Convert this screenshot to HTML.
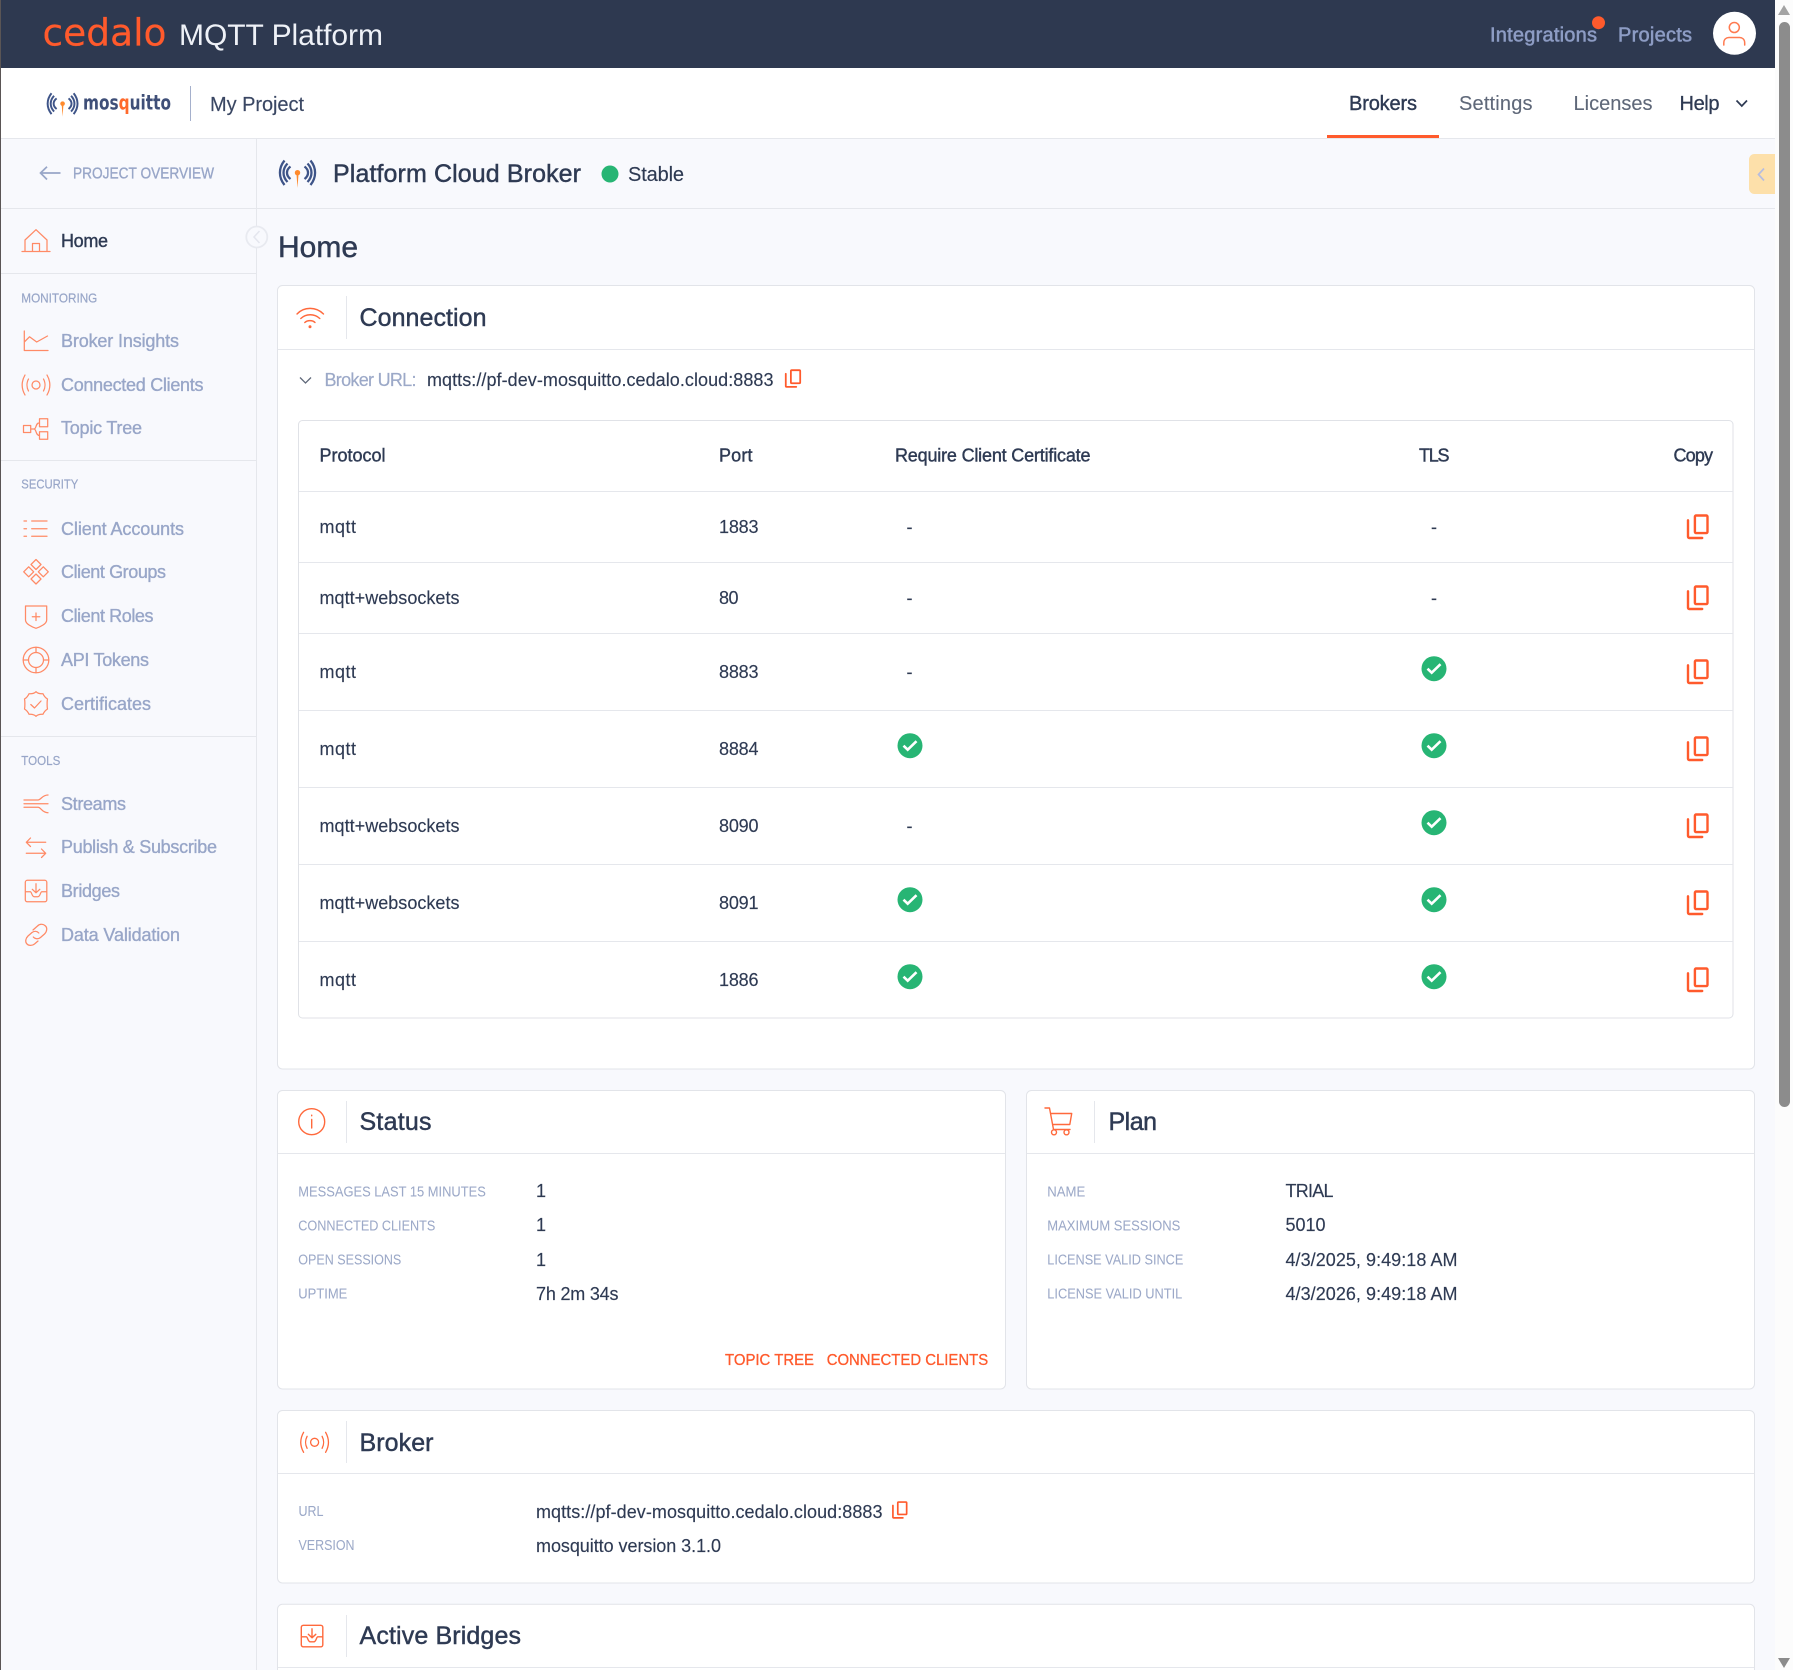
<!DOCTYPE html>
<html lang="en"><head><meta charset="utf-8"><title>Cedalo MQTT Platform - Home</title>
<style>
html,body{margin:0;padding:0;background:#f8f9fd}
svg{display:block}
text{font-family:"Liberation Sans",Arial,sans-serif;font-size:18px;fill:#2e3a53;stroke:#2e3a53;stroke-width:.14;white-space:pre}
.md{stroke:#2e3a53;stroke-width:.4}
.nav{fill:#98a6c8;stroke:#98a6c8;stroke-width:.35}
.sec{fill:#98a6c8;font-size:13px;stroke:#98a6c8;stroke-width:.2}
.lab{fill:#9ca9c8;font-size:14.500px;stroke:#9ca9c8;stroke-width:.05}
.ttl{font-size:25px;stroke:#2e3a53;stroke-width:.45}
.top{font-size:20px;fill:#8d9cc4;stroke:#8d9cc4;stroke-width:.55}
.tab{font-size:20px;fill:#5f6879;stroke:#5f6879;stroke-width:.12}
.lnk{font-size:16px;fill:#ff5a2c;stroke:#ff5a2c;stroke-width:.3}
.si{fill:none;stroke:#ff8a66;stroke-width:1.25;stroke-linecap:round;stroke-linejoin:round}
.ci{fill:none;stroke:#ff693c;stroke-width:1.4;stroke-linecap:round;stroke-linejoin:round}
.ln{fill:#e5e7ec}
.card{fill:#fff;stroke:#e2e4e9;stroke-width:1}
</style></head><body>
<svg xmlns="http://www.w3.org/2000/svg" width="1793" height="1670" viewBox="0 0 1793 1670">
<defs>
<symbol id="copy" viewBox="0 0 22 25" overflow="visible"><g fill="none" stroke="#ff5a2c" stroke-width="2.4" stroke-linejoin="round" stroke-linecap="round"><rect x="8.200" y="1.200" width="12.600" height="17.600" rx="1.200"/><path d="M1.300 6V22.500a1.200 1.200 0 0 0 1.200 1.200H15.500"/></g></symbol>
<g id="chk"><circle r="12.500" fill="#27b574"/><path d="M-6.500 0L-2.300 4 6.500-4.500" fill="none" stroke="#fff" stroke-width="2.600"/></g>
<g id="ant" fill="none"><path stroke="#3e5488" stroke-width="2.300" d="M6.500 1.500C.4 9 .4 18.400 6.500 26M9.500 4.500C4.200 10 4.200 17.400 9.500 23M12.500 7.500C7.800 11 7.800 16.400 12.500 20M32.500 1.500C38.600 9 38.600 18.400 32.500 26M29.500 4.500C34.800 10 34.800 17.400 29.500 23M26.500 7.500C31.200 11 31.200 16.400 26.500 20"/><path d="M18.400 14H20.600L19.500 29Z" fill="#ff8a2c"/><circle cx="19.500" cy="13.700" r="2.700" fill="#ff8a2c"/></g>
<path id="radio" d="M-7.500-6C-9.500-2.300-9.500 2.300-7.500 6M7.500-6C9.500-2.300 9.500 2.300 7.500 6M-11-10C-14.700-3.500-14.700 3.500-11 10M11-10C14.700-3.500 14.700 3.500 11 10"/>
<path id="tray" d="M0 2a2 2 0 0 1 2-2H19.500a2 2 0 0 1 2 2V19.500a2 2 0 0 1-2 2H2a2 2 0 0 1-2-2ZM0 11.500H5C6.500 11.500 6.500 16.500 9 16.500H12.500C15 16.500 15 11.500 16.500 11.500H21.500M10.700 3.500V12.500M7 9L10.700 12.500 14.500 9"/>
</defs>

<!-- page -->
<rect width="1793" height="1670" fill="#f8f9fd"/>
<rect x="1775" width="18" height="1670" fill="#fcfcfc"/>
<rect width="1" height="1670" fill="#5a5555"/>
<rect x="1" width="1774" height="68" fill="#2e3950"/>
<rect x="1" y="68" width="1774" height="70" fill="#fff"/>
<rect x="1" y="138" width="1774" height="1" class="ln"/>
<rect x="1" y="208" width="1774" height="1" class="ln"/>
<rect x="256" y="139" width="1" height="1531" class="ln"/>
<rect x="1" y="273" width="255" height="1" class="ln"/>
<rect x="1" y="460" width="255" height="1" class="ln"/>
<rect x="1" y="736" width="255" height="1" class="ln"/>

<!-- top bar -->
<text x="42.500" y="45.700" style="font-family:'DejaVu Sans','Liberation Sans',sans-serif;font-size:37px;fill:#ff5a2c;stroke:#ff5a2c;stroke-width:.2" textLength="124" lengthAdjust="spacingAndGlyphs">cedalo</text>
<text x="179" y="45" style="font-size:30px;fill:#eef1f7;stroke:none" textLength="204">MQTT Platform</text>
<text x="1490" y="41.500" class="top" textLength="107">Integrations</text>
<circle cx="1598.500" cy="22.700" r="6.500" fill="#ff5a2c"/>
<text x="1618" y="41.500" class="top" textLength="74">Projects</text>
<circle cx="1734.500" cy="33.300" r="21.500" fill="#fff"/>
<g class="si" style="stroke:#ff7a50;stroke-width:1.500"><circle cx="1734.300" cy="27.500" r="5"/><path d="M1723.800 45V43C1723.800 39 1726.500 37.500 1729 37.500H1739.500C1742 37.500 1744.700 39 1744.700 43V45"/></g>

<!-- sub bar -->
<use href="#ant" transform="translate(46 92) scale(.85)"/>
<text x="83" y="109.500" style="font-family:'DejaVu Sans','Liberation Sans',sans-serif;font-size:20px;font-weight:700;fill:#3f4f78;stroke:none" textLength="88" lengthAdjust="spacingAndGlyphs">mos<tspan fill="#ff6a2c">q</tspan>uitto</text>
<rect x="190" y="86" width="1" height="35" fill="#a5b0cc"/>
<text x="210" y="111" style="font-size:20px;fill:#3a4763;stroke:#3a4763" textLength="94">My Project</text>
<text x="1349" y="110" style="font-size:20px;stroke-width:.4" textLength="68">Brokers</text>
<rect x="1327" y="135" width="112" height="3" fill="#ff5a2c"/>
<text x="1459" y="110" class="tab" textLength="73.500">Settings</text>
<text x="1573.500" y="110" class="tab" textLength="79">Licenses</text>
<text x="1679.500" y="110" style="font-size:20px;stroke-width:.3" textLength="40">Help</text>
<path d="M1736.500 100.500L1741.800 106 1747 100.500" fill="none" stroke="#2e3a53" stroke-width="1.700"/>

<!-- breadcrumb -->
<path d="M41 173H60.500M47 166.800L40.500 173 47 179.500" fill="none" stroke="#98a6c8" stroke-width="1.700"/>
<text x="73" y="178.300" class="nav" style="font-size:16px" textLength="141" lengthAdjust="spacingAndGlyphs">PROJECT OVERVIEW</text>
<use href="#ant" transform="translate(278 159)"/>
<text x="333" y="182" class="ttl" textLength="248">Platform Cloud Broker</text>
<circle cx="610" cy="174" r="8.500" fill="#27b574"/>
<text x="628" y="181" style="font-size:20px" textLength="56">Stable</text>
<path d="M1754.500 154H1775V194H1754.500a5.500 5.500 0 0 1-5.500-5.500V159.500a5.500 5.500 0 0 1 5.500-5.500Z" fill="#fde0aa"/>
<path d="M1764 168.500L1758.500 174.500 1764 180.500" fill="none" stroke="#b6bde0" stroke-width="1.700"/>

<!-- sidebar -->
<g class="si">
<path d="M22 251.500H50M25 251.500V240L36 229.700 47 240V251.500M32.500 251.500V243.500H39.500V251.500"/>
<path d="M24.300 331V350.500H48M24.300 342L29.500 336.800 36.700 342 47.500 336"/>
<circle cx="36" cy="385" r="4"/><use href="#radio" transform="translate(36 385)"/>
<path d="M23.500 425.500H30.700V432.500H23.500ZM39.500 418.700H47.700V426.700H39.500ZM39.500 431.700H47.700V439.300H39.500ZM30.700 429H34C36.500 429 35.500 422.700 39.500 422.700M34 429C36.500 429 35.500 435.500 39.500 435.500"/>
<path d="M24 521H26.500M31.700 521H47M24 528.700H26.500M31.700 528.700H47M24 536.300H26.500M31.700 536.300H47"/>
<path d="M36 559.500L41 564.500 36 569.500 31 564.500ZM36 574L41 579 36 584 31 579ZM28.700 566.800L33.700 571.800 28.700 576.800 23.700 571.800ZM43.300 566.800L48.300 571.800 43.300 576.800 38.300 571.800Z"/>
<path d="M25.500 606H46.700V620C46.700 624 40 627 36 628.300 32 627 25.500 624 25.500 620ZM36 613V620.500M32.300 616.800H39.800"/>
<circle cx="36" cy="660" r="12.800"/><circle cx="36" cy="660" r="7.500"/><path d="M36 647.200V652.500M36 667.500V672.800M23.200 660H28.500M43.500 660H48.800"/>
<path d="M36 691.700C38 693.700 40 694 43 693.700 44 696 45 697.500 47.500 699 47 701 47 707 47.500 709 45 710.500 44 712 43 714.300 40 714 38 714.300 36 716.300 34 714.300 32 714 29 714.300 28 712 27 710.500 24.500 709 25 707 25 701 24.500 699 27 697.500 28 696 29 693.700 32 694 34 693.700 36 691.700ZM30.800 704.500L34.500 708 41 701"/>
<path d="M24 800H38C41 800 42 795 48 795M24 803.700H48M24 807.300H38C41 807.300 42 812.700 48 812.700"/>
<path d="M26.300 842.300H45.700M30.500 838L26.300 842.300 30.500 846.500M26.300 853.300H45.700M41.500 849L45.700 853.300 41.500 857.500"/>
<use href="#tray" transform="translate(25.300 880.300)"/>
<path d="M33 930L37.500 926C40 923.500 43.500 924 45.500 926 47.500 928 47 931.500 44.500 934L40.500 937.500C38.200 939.500 35 939 33.300 937M38 941L34.500 944C32 946 28.500 945.800 26.800 943.800 25 941.800 25.500 938.500 28 936L32 932.500C34.300 930.800 37 931 38.800 933"/>
</g>
<circle cx="256.800" cy="237" r="10.500" fill="#f8f9fd" stroke="#e8eaf0" stroke-width="1.800"/>
<path d="M259.500 231L254 237 259.500 243" fill="none" stroke="#e4e6ee" stroke-width="1.500"/>
<text x="61" y="247" class="md" textLength="47">Home</text>
<text x="21.300" y="302.300" class="sec" textLength="76" lengthAdjust="spacingAndGlyphs">MONITORING</text>
<text x="61" y="347" class="nav" textLength="118">Broker Insights</text>
<text x="61" y="391" class="nav" textLength="142.500">Connected Clients</text>
<text x="61" y="434" class="nav" textLength="81">Topic Tree</text>
<text x="21.300" y="488.700" class="sec" textLength="57" lengthAdjust="spacingAndGlyphs">SECURITY</text>
<text x="61" y="535" class="nav" textLength="123">Client Accounts</text>
<text x="61" y="578" class="nav" textLength="105">Client Groups</text>
<text x="61" y="622" class="nav" textLength="92.500">Client Roles</text>
<text x="61" y="666" class="nav" textLength="88">API Tokens</text>
<text x="61" y="710" class="nav" textLength="90">Certificates</text>
<text x="21.300" y="765" class="sec" textLength="39" lengthAdjust="spacingAndGlyphs">TOOLS</text>
<text x="61" y="810" class="nav" textLength="65">Streams</text>
<text x="61" y="853" class="nav" textLength="156">Publish &amp; Subscribe</text>
<text x="61" y="897" class="nav" textLength="59">Bridges</text>
<text x="61" y="941" class="nav" textLength="119">Data Validation</text>

<!-- page title -->
<text x="278" y="257" style="font-size:30px;stroke-width:.45" textLength="80">Home</text>

<!-- connection card -->
<rect x="277.500" y="285.500" width="1477" height="783.500" rx="5" class="card"/>
<rect x="278" y="349" width="1476" height="1" class="ln"/>
<rect x="346" y="296" width="1" height="43" class="ln"/>
<g class="ci"><path d="M297 314C304 306.500 316 306.500 323.500 314M300.800 318.500C306 313.500 314.500 313.500 319.800 318.500M304.800 322.500C307.500 320 312.500 320 315 322.500"/><circle cx="310" cy="326.700" r=".8" fill="#ff693c"/></g>
<text x="359.500" y="325.800" class="ttl" textLength="127">Connection</text>
<path d="M300 377.500L305.500 383 311 377.500" fill="none" stroke="#5f6879" stroke-width="1.300"/>
<text x="324.500" y="386" style="fill:#9ca9c8;stroke:#9ca9c8;stroke-width:.2" textLength="92">Broker URL:</text>
<text x="427" y="386" textLength="346.500">mqtts://pf-dev-mosquitto.cedalo.cloud:8883</text>
<use href="#copy" x="784.700" y="369.300" width="16.500" height="18.500"/>

<rect x="298.500" y="420.500" width="1434.500" height="597.500" rx="4" fill="#fff" stroke="#e0e2e7"/>
<rect x="299" y="491" width="1434" height="1" class="ln"/>
<rect x="299" y="562" width="1434" height="1" class="ln"/>
<rect x="299" y="633" width="1434" height="1" class="ln"/>
<rect x="299" y="710" width="1434" height="1" class="ln"/>
<rect x="299" y="787" width="1434" height="1" class="ln"/>
<rect x="299" y="864" width="1434" height="1" class="ln"/>
<rect x="299" y="941" width="1434" height="1" class="ln"/>

<text x="319.500" y="461.500" class="md" textLength="66">Protocol</text>
<text x="719" y="461.500" class="md" textLength="33.500">Port</text>
<text x="895" y="461.500" class="md" textLength="195.500">Require Client Certificate</text>
<text x="1419" y="461.500" class="md" textLength="30.500">TLS</text>
<text x="1673.500" y="461.500" class="md" textLength="39.500">Copy</text>

<text x="319.500" y="533" textLength="36.500">mqtt</text><text x="719" y="533" textLength="39.500">1883</text>
<text x="906.500" y="533">-</text><text x="1431" y="533">-</text>
<text x="319.500" y="604" textLength="140">mqtt+websockets</text><text x="719" y="604" textLength="19.500">80</text>
<text x="906.500" y="604">-</text><text x="1431" y="604">-</text>
<text x="319.500" y="677.800" textLength="36.500">mqtt</text><text x="719" y="677.800" textLength="39.500">8883</text>
<text x="906.500" y="677.800">-</text>
<text x="319.500" y="754.800" textLength="36.500">mqtt</text><text x="719" y="754.800" textLength="39.500">8884</text>
<text x="319.500" y="831.800" textLength="140">mqtt+websockets</text><text x="719" y="831.800" textLength="39.500">8090</text>
<text x="906.500" y="831.800">-</text>
<text x="319.500" y="908.800" textLength="140">mqtt+websockets</text><text x="719" y="908.800" textLength="39.500">8091</text>
<text x="319.500" y="985.800" textLength="36.500">mqtt</text><text x="719" y="985.800" textLength="39.500">1886</text>

<use href="#chk" transform="translate(1434 668.700)"/>
<use href="#chk" transform="translate(910 745.700)"/><use href="#chk" transform="translate(1434 745.700)"/>
<use href="#chk" transform="translate(1434 822.700)"/>
<use href="#chk" transform="translate(910 899.700)"/><use href="#chk" transform="translate(1434 899.700)"/>
<use href="#chk" transform="translate(910 976.700)"/><use href="#chk" transform="translate(1434 976.700)"/>

<use href="#copy" x="1686.700" y="514.300" width="22" height="25"/>
<use href="#copy" x="1686.700" y="585.300" width="22" height="25"/>
<use href="#copy" x="1686.700" y="659.300" width="22" height="25"/>
<use href="#copy" x="1686.700" y="736.300" width="22" height="25"/>
<use href="#copy" x="1686.700" y="813.300" width="22" height="25"/>
<use href="#copy" x="1686.700" y="890.300" width="22" height="25"/>
<use href="#copy" x="1686.700" y="967.300" width="22" height="25"/>

<!-- status card -->
<rect x="277.500" y="1090.500" width="728" height="298.500" rx="5" class="card"/>
<rect x="278" y="1153" width="727" height="1" class="ln"/>
<rect x="346" y="1101" width="1" height="42" class="ln"/>
<g class="ci"><circle cx="311.700" cy="1121.700" r="13"/><path d="M311.700 1119.500V1128M311.700 1115.200V1115.800"/></g>
<text x="359.500" y="1130" class="ttl" textLength="72">Status</text>
<text x="298.300" y="1196.500" class="lab" textLength="187.500" lengthAdjust="spacingAndGlyphs">MESSAGES LAST 15 MINUTES</text>
<text x="298.300" y="1230.500" class="lab" textLength="137" lengthAdjust="spacingAndGlyphs">CONNECTED CLIENTS</text>
<text x="298.300" y="1264.500" class="lab" textLength="103" lengthAdjust="spacingAndGlyphs">OPEN SESSIONS</text>
<text x="298.300" y="1298.500" class="lab" textLength="49" lengthAdjust="spacingAndGlyphs">UPTIME</text>
<text x="536" y="1197">1</text>
<text x="536" y="1231">1</text>
<text x="536" y="1266">1</text>
<text x="536" y="1300" textLength="82.500">7h 2m 34s</text>
<text x="725" y="1365" class="lnk" textLength="89" lengthAdjust="spacingAndGlyphs">TOPIC TREE</text>
<text x="826.700" y="1365" class="lnk" textLength="161.500" lengthAdjust="spacingAndGlyphs">CONNECTED CLIENTS</text>

<!-- plan card -->
<rect x="1026.500" y="1090.500" width="728" height="298.500" rx="5" class="card"/>
<rect x="1027" y="1153" width="727" height="1" class="ln"/>
<rect x="1094" y="1101" width="1" height="42" class="ln"/>
<g class="ci"><path d="M1045 1108H1049.500L1053.500 1129.500H1070M1050.500 1113.500H1071.700L1069.800 1124.500H1052.500"/><circle cx="1054" cy="1132.300" r="2.500"/><circle cx="1066.500" cy="1132.300" r="2.500"/></g>
<text x="1108.500" y="1130" class="ttl" textLength="48.500">Plan</text>
<text x="1047.300" y="1196.500" class="lab" textLength="38" lengthAdjust="spacingAndGlyphs">NAME</text>
<text x="1047.300" y="1230.500" class="lab" textLength="133" lengthAdjust="spacingAndGlyphs">MAXIMUM SESSIONS</text>
<text x="1047.300" y="1264.500" class="lab" textLength="136" lengthAdjust="spacingAndGlyphs">LICENSE VALID SINCE</text>
<text x="1047.300" y="1298.500" class="lab" textLength="135" lengthAdjust="spacingAndGlyphs">LICENSE VALID UNTIL</text>
<text x="1285.500" y="1197" textLength="48">TRIAL</text>
<text x="1285.500" y="1231" textLength="40">5010</text>
<text x="1285.500" y="1266" textLength="172">4/3/2025, 9:49:18 AM</text>
<text x="1285.500" y="1300" textLength="172">4/3/2026, 9:49:18 AM</text>

<!-- broker card -->
<rect x="277.500" y="1410.500" width="1477" height="172.500" rx="5" class="card"/>
<rect x="278" y="1473" width="1476" height="1" class="ln"/>
<rect x="346" y="1421" width="1" height="42" class="ln"/>
<g class="ci" style="stroke-width:1.300"><circle cx="314.600" cy="1442.300" r="4"/><use href="#radio" transform="translate(314.600 1442.300)"/></g>
<text x="359.500" y="1450.800" class="ttl" textLength="74">Broker</text>
<text x="298.500" y="1516" class="lab" textLength="25" lengthAdjust="spacingAndGlyphs">URL</text>
<text x="536" y="1518" textLength="346.500">mqtts://pf-dev-mosquitto.cedalo.cloud:8883</text>
<use href="#copy" x="892" y="1501" width="15.500" height="18"/>
<text x="298.500" y="1550" class="lab" textLength="56" lengthAdjust="spacingAndGlyphs">VERSION</text>
<text x="536" y="1552" textLength="185">mosquitto version 3.1.0</text>

<!-- active bridges card -->
<path d="M277.500 1670V1609.300a5 5 0 0 1 5-5H1749.500a5 5 0 0 1 5 5V1670" class="card"/>
<rect x="278" y="1667" width="1476" height="1" class="ln"/>
<rect x="346" y="1615" width="1" height="42" class="ln"/>
<use href="#tray" transform="translate(301.300 1625.300)" class="ci"/>
<text x="359.500" y="1643.800" class="ttl" textLength="161.500">Active Bridges</text>

<!-- scrollbar -->
<path d="M1778 15H1790L1784 5Z" fill="#a3a3a3"/>
<rect x="1779" y="22" width="11" height="1085" rx="5.500" fill="#8c8c8c"/>
<path d="M1778 1658H1790L1784 1668Z" fill="#8c8c8c"/>
</svg>
</body></html>
